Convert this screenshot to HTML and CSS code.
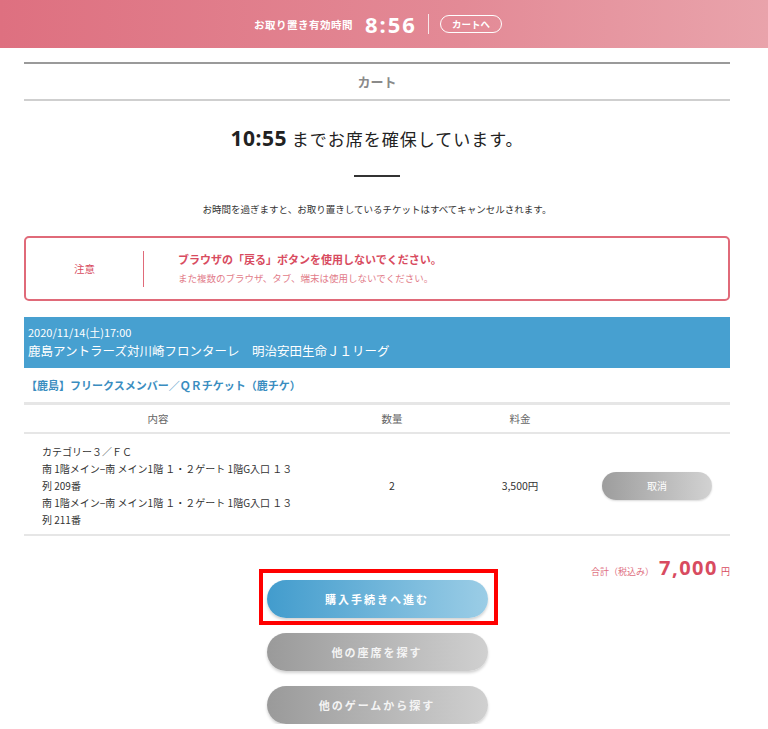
FILE: index.html
```html
<!DOCTYPE html>
<html lang="ja">
<head>
    <meta charset="UTF-8">
    <meta name="viewport" content="width=device-width, initial-scale=1.0">
    <title>カート</title>
    <link rel="stylesheet" href="styles.css">
</head>
<body>
    <header class="hold-bar">
        <span class="hold-label">お取り置き有効時間</span>
        <span class="hold-time">8:56</span>
        <span class="hold-sep"></span>
        <a href="#" class="hold-cart">カートへ</a>
    </header>

    <main class="container">
        <h1 class="page-title">カート</h1>

        <p class="reserve-msg"><span class="reserve-time">10:55</span> までお席を確保しています。</p>
        <div class="short-rule"></div>
        <p class="reserve-note">お時間を過ぎますと、お取り置きしているチケットはすべてキャンセルされます。</p>

        <div class="notice">
            <div class="notice-label">注意</div>
            <div class="notice-body">
                <p class="notice-main">ブラウザの「戻る」ボタンを使用しないでください。</p>
                <p class="notice-sub">また複数のブラウザ、タブ、端末は使用しないでください。</p>
            </div>
        </div>

        <div class="event-head">
            <div class="event-date">2020/11/14(土)17:00</div>
            <div class="event-name">鹿島アントラーズ対川崎フロンターレ　明治安田生命Ｊ１リーグ</div>
        </div>

        <div class="ticket-type">【鹿島】フリークスメンバー／ＱＲチケット（鹿チケ）</div>

        <div class="cart-table">
            <div class="cart-row cart-row-head">
                <div class="col-item">内容</div>
                <div class="col-qty">数量</div>
                <div class="col-price">料金</div>
                <div class="col-action"></div>
            </div>
            <div class="cart-row cart-row-body">
                <div class="col-item item-text">
                    カテゴリー３／ＦＣ<br>
                    南 1階メイン−南 メイン1階 １・２ゲート 1階G入口 １３<br>
                    列 209番<br>
                    南 1階メイン−南 メイン1階 １・２ゲート 1階G入口 １３<br>
                    列 211番
                </div>
                <div class="col-qty">2</div>
                <div class="col-price">3,500円</div>
                <div class="col-action"><a href="#" class="btn-cancel">取消</a></div>
            </div>
        </div>

        <div class="total">
            <span class="total-label">合計（税込み）</span>
            <span class="total-value">7,000</span>
            <span class="total-unit">円</span>
        </div>

        <div class="actions">
            <div class="highlight-wrap">
                <a href="#" class="btn btn-primary">購入手続きへ進む</a>
                <span class="highlight-box"></span>
            </div>
            <a href="#" class="btn btn-gray">他の座席を探す</a>
            <a href="#" class="btn btn-gray">他のゲームから探す</a>
        </div>
    </main>
</body>
</html>
```

FILE: styles.css
```css
:root {
    --pink: #e06a79;
    --pink-dark: #d84b60;
    --blue: #47a0d0;
    --link: #3a8dc0;
    --text: #333333;
    --line: #e2e2e2;
}

body {
    margin: 0;
    font-family: "Noto Sans CJK JP", "Noto Sans", sans-serif;
    color: var(--text);
    background: #ffffff;
}

p {
    margin: 0;
}

a {
    text-decoration: none;
}

.hold-bar {
    height: 48px;
    display: flex;
    align-items: center;
    justify-content: center;
    padding-right: 12px;
    background: linear-gradient(90deg, #de7080 0%, #e38a96 60%, #e9a3ab 100%);
    color: #ffffff;
}

.hold-label {
    font-size: 10.5px;
    font-weight: 700;
    letter-spacing: 0.5px;
}

.hold-time {
    font-family: "Noto Sans", sans-serif;
    font-size: 22px;
    font-weight: 700;
    letter-spacing: 2px;
    margin-left: 12px;
}

.hold-sep {
    width: 1px;
    height: 20px;
    background: rgba(255, 255, 255, 0.8);
    margin: 0 11px 0 11px;
}

.hold-cart {
    color: #ffffff;
    font-size: 9.5px;
    font-weight: 700;
    border: 1px solid #ffffff;
    border-radius: 10px;
    padding: 1px 11px;
    line-height: 14px;
}

.container {
    width: 706px;
    margin: 14px 0 0 24px;
}

.page-title {
    margin: 0;
    height: 35px;
    line-height: 35px;
    border-top: 2px solid #9a9a9a;
    border-bottom: 2px solid #cfcfcf;
    text-align: center;
    font-size: 13px;
    font-weight: 700;
    color: #8a8a8a;
}

.reserve-msg {
    margin-top: 23px;
    line-height: 28px;
    text-align: center;
    font-size: 17px;
    letter-spacing: 1px;
    color: #222222;
}

.reserve-time {
    font-family: "Noto Sans", sans-serif;
    font-size: 21px;
    font-weight: 700;
    letter-spacing: 0.5px;
}

.short-rule {
    width: 46px;
    height: 2px;
    background: #333333;
    margin: 22px auto 0;
}

.reserve-note {
    margin-top: 24px;
    line-height: 16px;
    text-align: center;
    font-size: 9.5px;
}

.notice {
    margin-top: 19px;
    height: 61px;
    border: 2px solid var(--pink);
    border-radius: 5px;
    display: flex;
    align-items: center;
}

.notice-label {
    width: 117px;
    height: 36px;
    line-height: 36px;
    text-align: center;
    font-size: 10.5px;
    color: var(--pink-dark);
    border-right: 1px solid var(--pink);
}

.notice-body {
    padding-left: 34px;
}

.notice-main {
    font-size: 11px;
    font-weight: 700;
    color: var(--pink-dark);
    line-height: 17px;
}

.notice-sub {
    margin-top: 2px;
    font-size: 9.5px;
    color: #e27c8a;
    line-height: 16px;
}

.event-head {
    margin-top: 16px;
    height: 51px;
    background: var(--blue);
    color: #ffffff;
    padding-left: 4px;
    display: flex;
    flex-direction: column;
    justify-content: center;
}

.event-date {
    font-size: 11px;
    line-height: 17px;
}

.event-name {
    font-size: 12.5px;
    line-height: 20px;
}

.ticket-type {
    height: 34px;
    line-height: 34px;
    padding-left: 2px;
    font-size: 11px;
    font-weight: 700;
    color: var(--link);
}

.cart-table {
    border-top: 3px solid #e6e6e6;
}

.cart-row {
    display: grid;
    grid-template-columns: 268px 200px 56px 1fr;
    align-items: center;
    border-bottom: 2px solid #e6e6e6;
    font-size: 10.5px;
}

.cart-row-head {
    height: 27px;
    color: #666666;
}

.col-item,
.col-qty,
.col-price {
    text-align: center;
}

.cart-row-body {
    padding: 9px 0 6px;
    color: #333333;
}

.item-text {
    text-align: left;
    padding-left: 18px;
    line-height: 17px;
    font-size: 10px;
    white-space: nowrap;
}

.col-action {
    display: flex;
    justify-content: flex-end;
    padding-right: 18px;
}

.btn-cancel {
    width: 110px;
    height: 28px;
    line-height: 28px;
    border-radius: 14px;
    text-align: center;
    color: #ffffff;
    font-size: 10px;
    background: linear-gradient(90deg, #9d9d9d, #d2d2d2);
    box-shadow: 0 1px 2px rgba(0, 0, 0, 0.15);
}

.total {
    margin-top: 18px;
    height: 24px;
    display: flex;
    justify-content: flex-end;
    align-items: baseline;
    color: var(--pink-dark);
}

.total-label {
    font-size: 9px;
    color: #e0707f;
}

.total-value {
    font-family: "Noto Sans", sans-serif;
    font-size: 20px;
    font-weight: 700;
    letter-spacing: 1.5px;
    margin: 0 3px 0 5px;
}

.total-unit {
    font-size: 9px;
}

.actions {
    margin-top: 2px;
    display: flex;
    flex-direction: column;
    align-items: center;
    gap: 15px;
}

.highlight-wrap {
    position: relative;
}

.highlight-box {
    position: absolute;
    top: -11px;
    left: -8px;
    right: -10px;
    bottom: -7px;
    border: 4px solid #ff0000;
}

.btn {
    display: block;
    width: 221px;
    height: 38px;
    line-height: 38px;
    border-radius: 19px;
    text-align: center;
    color: #ffffff;
    font-size: 11px;
    font-weight: 700;
    letter-spacing: 2px;
    box-shadow: 0 2px 3px rgba(0, 0, 0, 0.18);
}

.btn-primary {
    background: linear-gradient(90deg, #429ccd, #9bcde6);
}

.btn-gray {
    background: linear-gradient(90deg, #9a9a9a, #d0d0d0);
    color: #f4f4f4;
}
```
